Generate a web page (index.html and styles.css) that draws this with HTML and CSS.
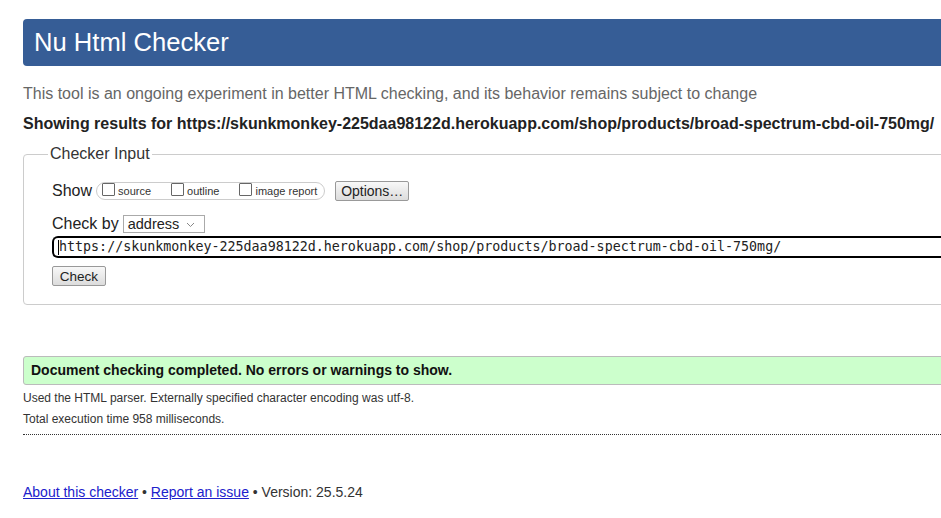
FILE: index.html
```html
<!DOCTYPE html>
<html lang="en">
<head>
<meta charset="utf-8">
<title>Showing results for https://skunkmonkey-225daa98122d.herokuapp.com/shop/products/broad-spectrum-cbd-oil-750mg/ - Nu Html Checker</title>
<link rel="stylesheet" href="styles.css">
</head>
<body>
<div class="page">
  <h1 class="banner">Nu Html Checker</h1>
  <p class="intro">This tool is an ongoing experiment in better HTML checking, and its behavior remains subject to change</p>
  <p class="showing">Showing results for https://skunkmonkey-225daa98122d.herokuapp.com/shop/products/broad-spectrum-cbd-oil-750mg/</p>

  <fieldset class="checker">
    <legend>Checker Input</legend>
    <div class="row show-row">
      <span class="label">Show</span>
      <div class="opts">
        <label class="opt"><span class="box"></span>source</label>
        <label class="opt"><span class="box"></span>outline</label>
        <label class="opt"><span class="box"></span>image report</label>
      </div>
      <span class="btn options">Options…</span>
    </div>
    <div class="row by-row">
      <span class="label">Check by</span>
      <span class="select">address
        <svg class="chev" width="9" height="6" viewBox="0 0 9 6"><path d="M1 1 L4.5 4.5 L8 1" fill="none" stroke="#888" stroke-width="1"/></svg>
      </span>
    </div>
    <div class="url"><span class="caret"></span>https://skunkmonkey-225daa98122d.herokuapp.com/shop/products/broad-spectrum-cbd-oil-750mg/</div>
    <div class="row submit-row">
      <span class="btn check">Check</span>
    </div>
  </fieldset>

  <p class="success">Document checking completed. No errors or warnings to show.</p>
  <div class="details">
    <p class="detail">Used the HTML parser. Externally specified character encoding was utf-8.</p>
    <p class="detail">Total execution time 958 milliseconds.</p>
  </div>

  <p class="footer"><a href="#">About this checker</a> • <a href="#">Report an issue</a> • Version: 25.5.24</p>
</div>
</body>
</html>
```

FILE: styles.css
```css
html, body {
  margin: 0;
  padding: 0;
  overflow: hidden;
  background: #fff;
}
body {
  font-family: "Liberation Sans", Arial, sans-serif;
  color: #222;
}
.page {
  width: 1200px;
  padding: 19px 0 0 23px;
}
.banner {
  margin: 0;
  height: 47px;
  line-height: 47px;
  padding-left: 11px;
  background: #365d96;
  color: #fff;
  font-size: 25.6px;
  font-weight: normal;
  border-radius: 4px;
}
.intro {
  margin: 19px 0 0;
  font-size: 16px;
  line-height: 18px;
  color: #666;
}
.showing {
  margin: 12px 0 0;
  font-size: 16px;
  line-height: 18px;
  font-weight: bold;
  color: #222;
}
.checker {
  margin: 12px 0 0;
  padding: 18px 28px 18px;
  border: 1px solid #ccc;
  border-radius: 4px;
  min-width: 0;
}
.checker legend {
  font-size: 16px;
  line-height: 18px;
  padding: 0 2px;
  margin-left: -4px;
  color: #333;
}
.row {
  display: flex;
  align-items: center;
}
.label {
  font-size: 16px;
  color: #222;
}
.show-row {
  height: 20px;
}
.opts {
  display: flex;
  align-items: center;
  height: 16px;
  margin-left: 4px;
  padding: 0 7px 0 5px;
  border: 1px solid #ccc;
  border-radius: 9px;
  gap: 20px;
}
.opt {
  display: flex;
  align-items: center;
  font-size: 11px;
  color: #333;
}
.box {
  width: 11px;
  height: 11px;
  border: 1px solid #666;
  border-radius: 1px;
  background: #fff;
  margin-right: 3px;
  margin-top: -3px;
}
.btn {
  display: inline-flex;
  align-items: center;
  justify-content: center;
  box-sizing: border-box;
  height: 20px;
  font-size: 14px;
  color: #222;
  border: 1px solid #999;
  border-radius: 2px;
  background: linear-gradient(#f8f8f8, #dcdcdc);
}
.options {
  width: 74px;
  margin-left: 10px;
}
.by-row {
  height: 20px;
  margin-top: 13px;
}
.select {
  position: relative;
  display: inline-flex;
  align-items: center;
  box-sizing: border-box;
  width: 82px;
  height: 18px;
  margin-left: 4px;
  padding-left: 4px;
  border: 1px solid #aaa;
  font-size: 14.5px;
  color: #222;
  background: #fff;
}
.chev {
  position: absolute;
  right: 9px;
  top: 6px;
}
.url {
  box-sizing: border-box;
  height: 22px;
  margin-top: 2px;
  padding-left: 4px;
  border: 2px solid #000;
  border-right: none;
  border-radius: 6px 0 0 6px;
  font-family: "DejaVu Sans Mono", monospace;
  font-size: 13.33px;
  line-height: 18px;
  color: #222;
  white-space: nowrap;
  display: flex;
  align-items: center;
}
.caret {
  display: inline-block;
  width: 1px;
  height: 15px;
  background: #000;
}
.submit-row {
  margin-top: 8px;
}
.check {
  width: 54px;
  font-size: 13.5px;
}
.success {
  margin: 51px 0 0;
  padding: 5px 7px;
  line-height: 17px;
  font-size: 14px;
  font-weight: bold;
  color: #111;
  background: #ccffcc;
  border: 1px solid #bbb;
  border-radius: 3px;
}
.details {
  margin-top: 6px;
  padding-bottom: 8px;
  border-bottom: 1px dotted #333;
}
.detail {
  margin: 0;
  font-size: 12px;
  line-height: 14px;
  color: #333;
}
.detail + .detail {
  margin-top: 7px;
}
.footer {
  margin: 49px 0 0;
  font-size: 14px;
  line-height: 16px;
  color: #333;
}
.footer a {
  color: #2020cc;
}
```
